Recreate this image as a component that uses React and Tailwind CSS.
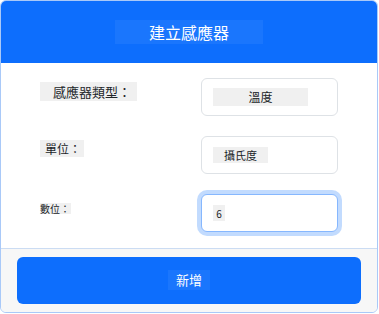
import React from 'react'

const font = { fontFamily: '"Noto Sans CJK TC", "Noto Sans", sans-serif' }

const Field = ({ label, labelClass, children, focused }) => (
  <div className="flex items-start">
    <div className="flex w-[161px] items-start pt-1">
      <span className={`block whitespace-nowrap bg-[#f0f0f0] text-[#212529] ${labelClass}`}>
        {label}
      </span>
    </div>
    <div
      className={`flex h-[38px] w-[137px] items-center rounded-md bg-white px-[11px] ${
        focused
          ? 'border border-[#86b7fe] shadow-[0_0_0_4px_rgba(13,110,253,0.25)]'
          : 'border border-[#dee2e6]'
      }`}
    >
      {children}
    </div>
  </div>
)

export default function App() {
  return (
    <div className="h-[314px] w-[379px] bg-white" style={font}>
      <div className="flex h-[313px] w-[378px] flex-col overflow-hidden rounded-md border border-[#a9c9f8]">
        {/* header */}
        <div className="flex h-[62px] shrink-0 items-center justify-center bg-[#0d6efd]">
          <div className="flex h-[24px] w-[148px] items-center justify-center bg-[#1a76fd] text-[16px] leading-none text-white">
            建立感應器
          </div>
        </div>

        {/* body */}
        <div className="flex flex-1 flex-col gap-[20px] bg-white pl-[39px] pt-[15px]">
          <Field label="感應器類型：" labelClass="h-[19px] w-[97px] pl-[13px] text-[13px] leading-[19px]">
            <div className="flex h-[18px] w-[95px] items-center justify-center bg-[#f0f0f0] text-[12px] text-[#212529]">
              溫度
            </div>
          </Field>
          <Field label="單位：" labelClass="h-[17px] w-[44px] pl-[5px] text-[12px] leading-[17px]">
            <div className="flex h-[16px] w-[55px] items-center justify-center bg-[#f0f0f0] text-[11px] text-[#212529]">
              攝氏度
            </div>
          </Field>
          <Field
            label="數位："
            labelClass="mt-[5px] h-[11px] pr-[1px] text-[10px] leading-[11px]"
            focused
          >
            <div className="flex h-[16px] w-[12px] items-center justify-center bg-[#f0f0f0] text-[10px] text-[#212529]">
              6
            </div>
          </Field>
        </div>

        {/* footer */}
        <div className="flex h-[64px] shrink-0 items-center justify-center border-t border-[#cbdcf3] bg-[#f7f7f7] pb-[1px]">
          <button className="flex h-[47px] w-[344px] items-center justify-center rounded-md bg-[#0d6efd]">
            <span className="flex h-[20px] w-[42px] items-center justify-center bg-[#1a76fd] text-[13px] text-white">
              新增
            </span>
          </button>
        </div>
      </div>
    </div>
  )
}
